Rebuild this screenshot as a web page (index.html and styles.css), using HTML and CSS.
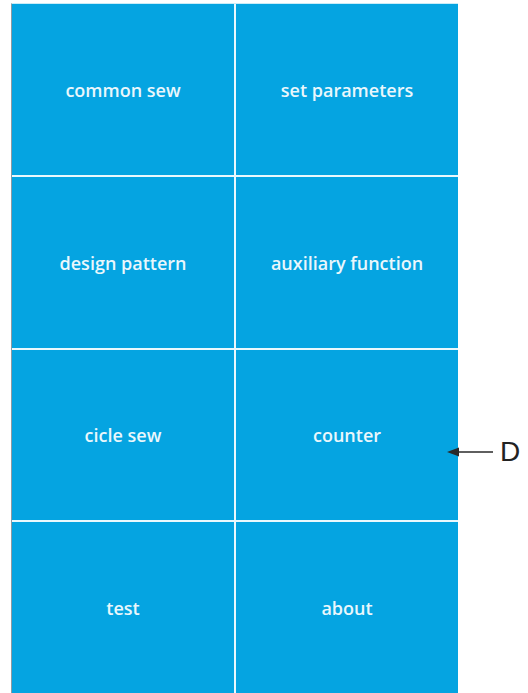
FILE: index.html
```html
<!DOCTYPE html>
<html lang="en">
<head>
    <meta charset="UTF-8">
    <title>Menu</title>
    <link rel="stylesheet" href="styles.css">
</head>
<body>
    <div class="page">
        <div class="panel">
            <div class="tile">common sew</div>
            <div class="tile">set parameters</div>
            <div class="tile">design pattern</div>
            <div class="tile">auxiliary function</div>
            <div class="tile">cicle sew</div>
            <div class="tile">counter</div>
            <div class="tile">test</div>
            <div class="tile">about</div>
        </div>

        <!-- callout label -->
        <div class="callout">
            <svg width="46" height="12" viewBox="0 0 46 12">
                <line x1="6" y1="6" x2="46" y2="6" stroke="#2a2a2a" stroke-width="1.6" />
                <polygon points="0,6 12,1.5 12,10.5" fill="#2a2a2a" />
            </svg>
            <span>D</span>
        </div>
    </div>
</body>
</html>
```

FILE: styles.css
```css
body {
    margin: 0;
    background: #fff;
}
.page {
    position: relative;
    width: 528px;
    height: 693px;
    overflow: hidden;
}
.panel {
    margin-left: 11px;
    margin-top: 3px;
    width: 447px;
    height: 690px;
    border-left: 1px solid #8d9aa3;
    border-top: 1px solid #c9ecf8;
    box-sizing: border-box;
    display: grid;
    grid-template-columns: 1fr 1fr;
    grid-template-rows: repeat(4, 1fr);
    gap: 2px;
    background: #eaf8fd;
}
.tile {
    background: #05a4e1;
    color: #eaf7fc;
    font-family: "Open Sans", "Noto Sans", sans-serif;
    font-size: 18px;
    font-weight: 600;
    display: flex;
    align-items: center;
    justify-content: center;
    padding-top: 1px;
}
.callout {
    position: absolute;
    left: 447px;
    top: 436px;
    display: flex;
    align-items: center;
    gap: 7px;
}
.callout span {
    font-family: "Liberation Sans", Arial, sans-serif;
    font-size: 28px;
    color: #222;
}
```
